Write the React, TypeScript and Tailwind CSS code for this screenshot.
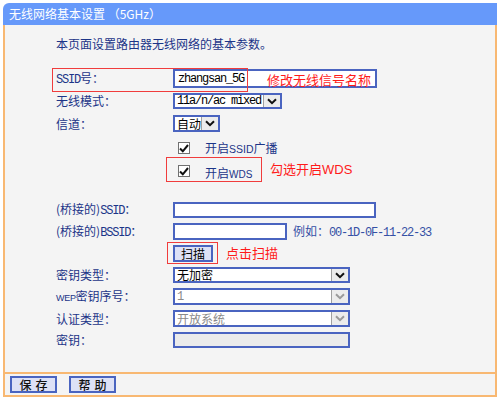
import React from "react";

const NAVY = "text-[#1c3588]";

function Chevron({ disabled }: { disabled?: boolean }) {
  return (
    <svg width="10" height="7" viewBox="0 0 10 7">
      <path
        d="M1 1.2 L5 5.2 L9 1.2"
        fill="none"
        stroke={disabled ? "#9a9a9a" : "#111"}
        strokeWidth="2"
      />
    </svg>
  );
}

function Select({
  text,
  w,
  h,
  disabled,
  mono,
}: {
  text: string;
  w: string;
  h: string;
  disabled?: boolean;
  mono?: boolean;
}) {
  return (
    <div className={`flex ${w} ${h} border-2 border-[#4a64c0] bg-white`}>
      <span
        className={`flex min-w-0 flex-1 items-center whitespace-nowrap pl-[2px] leading-none ${
          disabled ? "text-[#8a8a8a]" : "text-black"
        } ${
          mono
            ? "font-['Liberation_Mono'] text-[12px] tracking-[-1.2px]"
            : "text-[12px]"
        }`}
      >
        {text}
      </span>
      <span className="flex w-[17px] shrink-0 items-center justify-center border-l border-[#a0a0a0] bg-[#ececec]">
        <Chevron disabled={disabled} />
      </span>
    </div>
  );
}

function Label({ children }: { children: React.ReactNode }) {
  return (
    <span className={`w-[117px] shrink-0 whitespace-nowrap text-[12px] leading-none ${NAVY}`}>
      {children}
    </span>
  );
}

function Ascii({ children }: { children: React.ReactNode }) {
  return (
    <span className="font-['Liberation_Mono'] text-[12px] tracking-[-1.2px]">{children}</span>
  );
}

function Check() {
  return (
    <span className="flex h-[12px] w-[12px] items-center justify-center border border-[#707070] bg-white">
      <svg width="10" height="9" viewBox="0 0 10 9">
        <path d="M1 4.5 L3.8 7.3 L9 1" fill="none" stroke="#111" strokeWidth="2" />
      </svg>
    </span>
  );
}

export default function App() {
  return (
    <div className="h-[402px] w-[500px] bg-white pl-[3px] pt-[3px] font-['Noto_Sans_CJK_SC',sans-serif]">
      <div className="w-[494px]">
        {/* header */}
        <div className="flex h-[22px] items-center rounded-tl-[6px] bg-[#6699fa] pl-[6px] text-[12px] text-white">
          无线网络基本设置 （5GHz）
        </div>

        {/* body */}
        <div className="relative flex h-[347px] flex-col border-x-2 border-[#f8b872] bg-[#f4f4f4] pl-[51px]">
          <div className={`mt-[11px] flex h-[16px] items-center text-[12px] ${NAVY}`}>
            本页面设置路由器无线网络的基本参数。
          </div>

          <div className="mt-[17px] flex h-[19px] items-center">
            <Label>
              <Ascii>SSID</Ascii>号：
            </Label>
            <div className="flex h-[19px] w-[204px] items-center border-2 border-[#4a64c0] bg-white pl-[3px] text-black">
              <Ascii>zhangsan_5G</Ascii>
            </div>
          </div>

          <div className="mt-[5px] flex h-[16px] items-center">
            <Label>无线模式：</Label>
            <Select text="11a/n/ac mixed" w="w-[109px]" h="h-[16px]" mono />
          </div>

          <div className="mt-[6px] flex h-[17px] items-center">
            <Label>信道：</Label>
            <Select text="自动" w="w-[47px]" h="h-[17px]" />
          </div>

          <div className="mt-[8px] flex h-[16px] items-center">
            <span className="w-[122px] shrink-0" />
            <Check />
            <span className={`ml-[15px] text-[12px] leading-none ${NAVY}`}>
              开启<span className="font-['Liberation_Sans'] text-[10.5px]">SSID</span>广播
            </span>
          </div>

          <div className="mt-[7px] flex h-[16px] items-center">
            <span className="w-[122px] shrink-0" />
            <Check />
            <span className={`ml-[15px] mt-[5px] text-[12px] leading-none ${NAVY}`}>
              开启<span className="font-['Liberation_Sans'] text-[10px]">WDS</span>
            </span>
          </div>

          <div className="mt-[23px] flex h-[16px] items-center">
            <Label>
              (桥接的)<Ascii>SSID</Ascii>：
            </Label>
            <div className="h-[16px] w-[203px] border-2 border-[#4a64c0] bg-white" />
          </div>

          <div className="mt-[5px] flex h-[17px] items-center">
            <Label>
              (桥接的)<Ascii>BSSID</Ascii>：
            </Label>
            <div className="h-[17px] w-[114px] border-2 border-[#4a64c0] bg-white" />
            <span className="ml-[6px] whitespace-nowrap text-[12px] leading-none text-[#3550a5]">
              例如：<Ascii>00-1D-0F-11-22-33</Ascii>
            </span>
          </div>

          <div className="mt-[5px] flex h-[17px] items-center">
            <span className="w-[117px] shrink-0" />
            <button className="flex h-[17px] w-[40px] items-center justify-center border-2 border-[#4a64c0] bg-[#dde1f6] text-[12px] leading-none text-black">
              扫描
            </button>
          </div>

          <div className="mt-[5px] flex h-[16px] items-center">
            <Label>密钥类型：</Label>
            <Select text="无加密" w="w-[177px]" h="h-[16px]" />
          </div>

          <div className="mt-[5px] flex h-[17px] items-center">
            <Label>
              <span className="font-['Liberation_Sans'] text-[9px] tracking-[-0.3px]">WEP</span>
              密钥序号：
            </Label>
            <Select text="1" w="w-[177px]" h="h-[17px]" disabled mono />
          </div>

          <div className="mt-[5px] flex h-[17px] items-center">
            <Label>认证类型：</Label>
            <Select text="开放系统" w="w-[177px]" h="h-[17px]" disabled />
          </div>

          <div className="mt-[5px] flex h-[16px] items-center">
            <Label>密钥：</Label>
            <div className="h-[16px] w-[177px] border-2 border-[#4a64c0] bg-[#ebebeb]" />
          </div>

          {/* annotations */}
          <div className="absolute left-[47px] top-[43px] h-[24px] w-[196px] border-[1.5px] border-[#f03c3c]" />
          <span className="absolute left-[262px] top-[45px] text-[13px] leading-[20px] text-[#ff1a1a]">
            修改无线信号名称
          </span>
          <div className="absolute left-[161px] top-[132px] h-[25px] w-[96px] border-[1.5px] border-[#f03c3c]" />
          <span className="absolute left-[265px] top-[134px] text-[13px] leading-[20px] text-[#ff1a1a]">
            勾选开启<span className="font-['Liberation_Sans']">WDS</span>
          </span>
          <div className="absolute left-[162px] top-[217px] h-[22px] w-[51px] border-[1.5px] border-[#f03c3c]" />
          <span className="absolute left-[221px] top-[218px] text-[13px] leading-[20px] text-[#ff1a1a]">
            点击扫描
          </span>
        </div>

        {/* footer */}
        <div className="flex h-[25px] items-center gap-[12px] border-x-2 border-y-2 border-[#f8b872] bg-[#f4f4f4] pl-[5px]">
          <button className="flex h-[17px] w-[47px] items-center justify-center border-2 border-[#4a64c0] bg-[#dde1f6] pl-[4px] text-[12px] font-medium leading-none tracking-[4px] text-[#111]">
            保存
          </button>
          <button className="flex h-[17px] w-[47px] items-center justify-center border-2 border-[#4a64c0] bg-[#dde1f6] pl-[4px] text-[12px] font-medium leading-none tracking-[4px] text-[#111]">
            帮助
          </button>
        </div>
      </div>
    </div>
  );
}
